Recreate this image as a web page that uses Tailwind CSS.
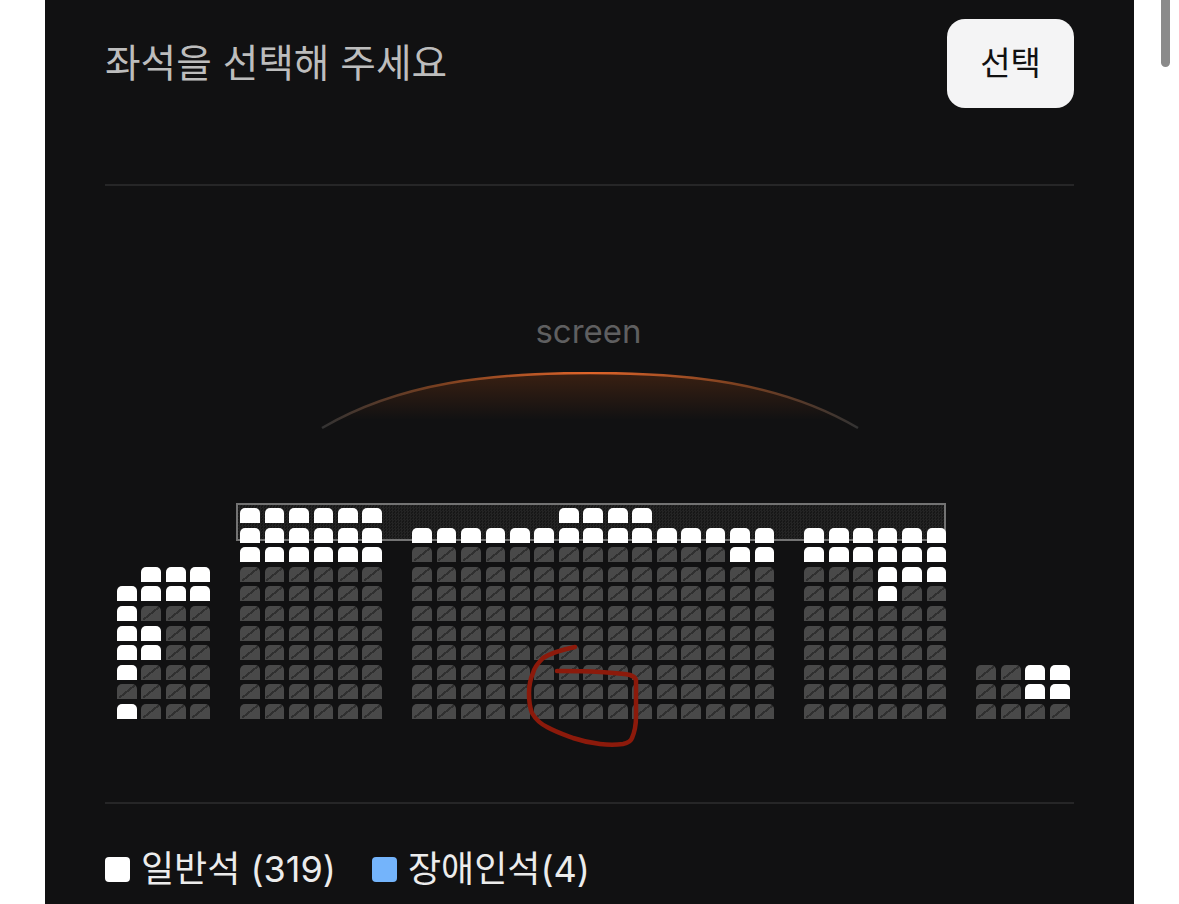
<!doctype html>
<html lang="ko">
<head>
<meta charset="utf-8">
<script src="https://cdn.jsdelivr.net/npm/@tailwindcss/browser@4"></script>
<title>좌석 선택</title>
</head>
<body class="bg-white m-0 overflow-hidden">
<div class="relative w-[1179px] h-[904px] overflow-hidden bg-white font-['Inter','Noto_Sans_CJK_KR',sans-serif]">
  <main class="ml-[45px] w-[1089px] h-[904px] bg-[#111112] px-[60px] pt-[19px]">
    <header class="flex justify-between items-start h-[89px]">
      <h1 class="font-normal text-[38.7px] leading-[88px] text-[#bdbdbd]">좌석을 선택해 주세요</h1>
      <button class="w-[127px] h-[89px] rounded-[18px] bg-[#f4f4f5] text-[#111] text-[33px] leading-none">선택</button>
    </header>
    <div class="mt-[76px] h-[2px] bg-[#262627]"></div>
    <section class="relative h-[618px]">
      <div class="pt-[126px] flex flex-col items-center">
        <p class="text-[#5f5f60] text-[33px] leading-[38px] -translate-x-[1px]">screen</p>
        <svg class="block mt-[22px]" width="548" height="70" viewBox="0 0 548 70" fill="none" aria-hidden="true">
          <defs>
            <linearGradient id="fill" x1="0" y1="0" x2="0" y2="1">
              <stop offset="0" stop-color="#5b2c12" stop-opacity=".55"/>
              <stop offset=".85" stop-color="#5b2c12" stop-opacity="0"/>
            </linearGradient>
            <linearGradient id="line" x1="0" y1="0" x2="1" y2="0">
              <stop offset="0" stop-color="#333"/>
              <stop offset=".22" stop-color="#7a4020"/>
              <stop offset=".5" stop-color="#e0652a"/>
              <stop offset=".78" stop-color="#7a4020"/>
              <stop offset="1" stop-color="#333"/>
            </linearGradient>
          </defs>
          <path d="M6 56 C84 10 176 1 274 1 C372 1 464 10 542 56 Z" fill="url(#fill)"/>
          <path d="M6 56 C84 10 176 1 274 1 C372 1 464 10 542 56" stroke="url(#line)" stroke-width="2.5"/>
        </svg>
      </div>
      <div class="absolute left-[131px] top-[317px] w-[710px] h-[38px] border-2 border-[#737373] bg-[#1b1b1b] bg-[repeating-conic-gradient(#242424_0_25%,#171717_0_50%)] bg-[length:3px_3px]"></div>
      <div id="seats" class="absolute left-[12px] top-[320px] w-[952px] h-[213px] flex items-end"></div>
      <svg class="absolute left-[-105px] top-[-186px] pointer-events-none" width="1179" height="904" viewBox="0 0 1179 904" fill="none" aria-hidden="true">
        <path d="M575 647 C560 650 548 655 543 658 C537 664 534 668 533 673 C530 680 529 686 529 693 C529 702 530 708 532 713 C536 720 541 724 547 727 C556 732 565 735 573 738 C582 741 591 743 600 744 C608 745 616 745 623 744 C628 743 631 741 632 738 C635 731 636 724 636 717 L636 680 C635 677 633 676 630 675 C620 673 610 673 600 672 C585 671 570 671 557 671" stroke="#8c1a0b" stroke-width="4.5" stroke-linecap="round" stroke-linejoin="round"/>
      </svg>
    </section>
    <div class="h-[2px] bg-[#262627] -mt-[2px]"></div>
    <footer class="mt-[40px] flex items-center text-[#ececec] text-[36px] leading-[50px]">
      <span class="w-[25px] h-[25px] rounded-[4px] bg-white mr-[11px]"></span>
      <span>일반석 (319)</span>
      <span class="w-[25px] h-[25px] rounded-[4px] bg-[#74b4fb] ml-[36px] mr-[11px]"></span>
      <span>장애인석(4)</span>
    </footer>
  </main>
  <div class="absolute left-[1161px] top-0 w-[9px] h-[67px] rounded-b-full bg-[#8a8a8a]"></div>
</div>
<script>
  var W = "w-[19.6px] h-[15px] rounded-t-[5px] bg-white";
  var G = "w-[19.6px] h-[15px] rounded-t-[5px] bg-[#494949] bg-[linear-gradient(to_bottom_right,transparent_calc(50%-1px),#303030_calc(50%-1px),#303030_calc(50%+1px),transparent_calc(50%+1px))] bg-[length:16px_13px] bg-center bg-no-repeat";
  var E = "w-[19.6px] h-[15px]";
  var M = {w: W, g: G, e: E};
  var blocks = [
    {cols: "grid-cols-[repeat(4,19.6px)]", ml: "ml-0", rows: ["ewww","wwww","wggg","wwgg","wwgg","wggg","gggg","wggg"]},
    {cols: "grid-cols-[repeat(6,19.6px)]", ml: "ml-[30px]", rows: ["wwwwww","wwwwww","wwwwww","gggggg","gggggg","gggggg","gggggg","gggggg","gggggg","gggggg","gggggg"]},
    {cols: "grid-cols-[repeat(15,19.6px)]", ml: "ml-[30px]", rows: ["eeeeeewwwweeeee","wwwwwwwwwwwwwww","gggggggggggggww","ggggggggggggggg","ggggggggggggggg","ggggggggggggggg","ggggggggggggggg","ggggggggggggggg","ggggggggggggggg","ggggggggggggggg","ggggggggggggggg"]},
    {cols: "grid-cols-[repeat(6,19.6px)]", ml: "ml-[30px]", rows: ["eeeeee","wwwwww","wwwwww","gggwww","gggwgg","gggggg","gggggg","gggggg","gggggg","gggggg","gggggg"]},
    {cols: "grid-cols-[repeat(4,19.6px)]", ml: "ml-[30px]", rows: ["ggww","ggww","gggg"]}
  ];
  var host = document.getElementById("seats");
  blocks.forEach(function (b) {
    var d = document.createElement("div");
    d.className = "grid gap-x-[4.9px] gap-y-[4.6px] shrink-0 " + b.cols + " " + b.ml;
    b.rows.join("").split("").forEach(function (c) {
      var s = document.createElement("span");
      s.className = M[c];
      d.appendChild(s);
    });
    host.appendChild(d);
  });
</script>
</body>
</html>
